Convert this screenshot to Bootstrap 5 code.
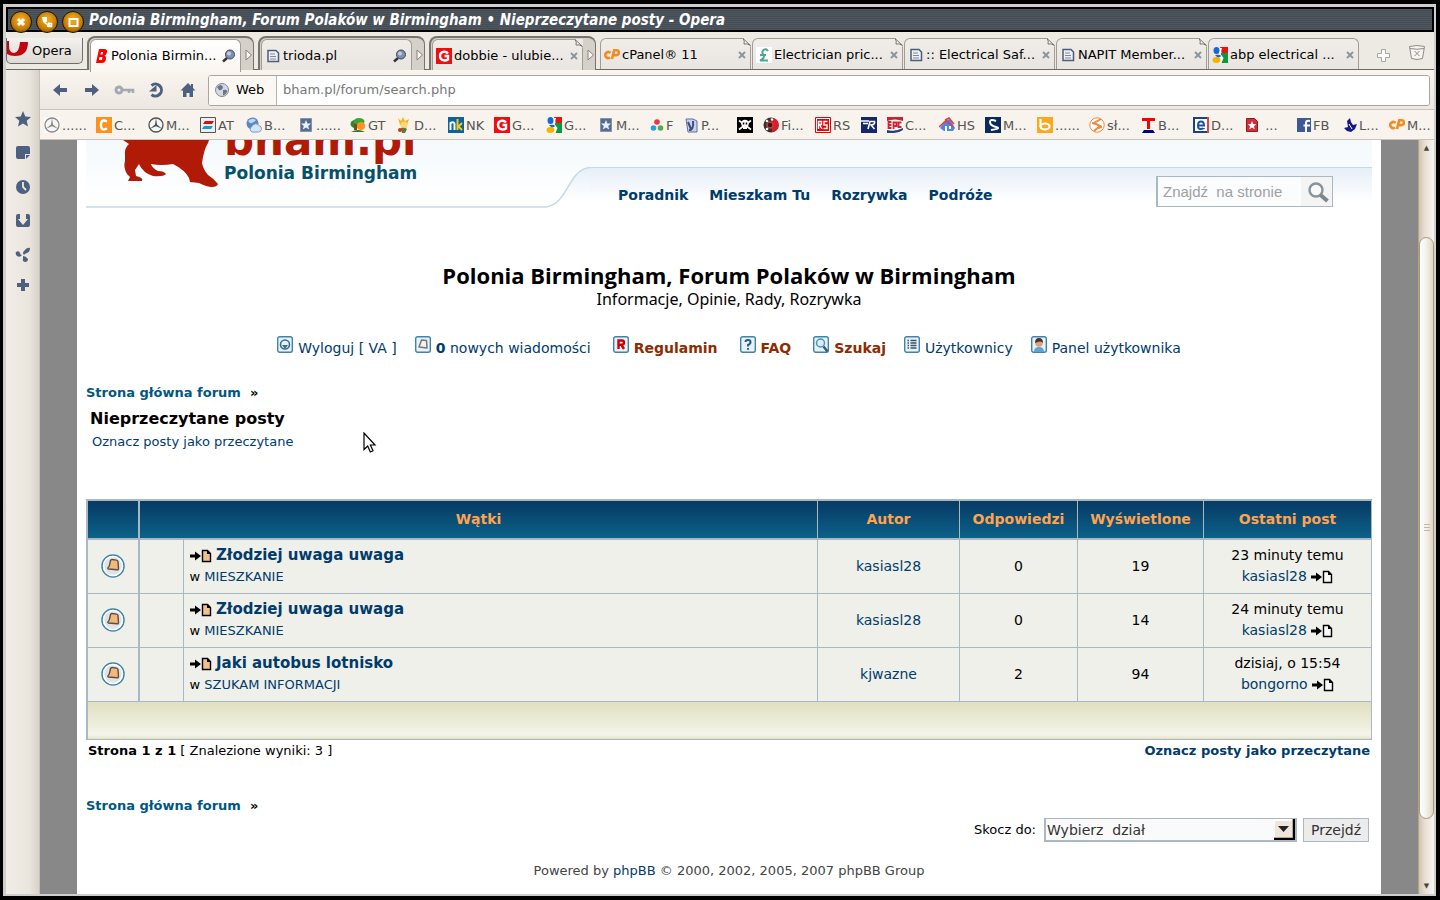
<!DOCTYPE html>
<html lang="pl">
<head>
<meta charset="utf-8">
<meta name="viewport" content="width=device-width, initial-scale=1">
<title>Polonia Birmingham, Forum Polaków w Birmingham • Nieprzeczytane posty</title>
<link href="https://cdn.jsdelivr.net/npm/bootstrap@5.3.0/dist/css/bootstrap.min.css" rel="stylesheet">
<style>
  body { font: 13px/18px "DejaVu Sans", sans-serif; color: #000; background: #000; }
  a { color: #003b6b; text-decoration: none; }
  svg { flex: none; }
  button { color: inherit; }

  /* window frame */
  .win { border: solid #000; border-width: 4px 4px 4px 3px; }
  .win-in { border: solid #cecece; border-width: 3px 2px 2px 3px; background: #ede9e3; }
  .titlebar { height: 25px; border: 2px solid #000; background: repeating-linear-gradient(#4e565e 0 1px, #444c55 1px 2px); padding-left: 2px; }
  .titlebar h1 { font: italic bold 15px/22px "DejaVu Sans Condensed", "DejaVu Sans", sans-serif; color: #fff; margin: 0; padding-left: 1px; }
  .orb { width: 22px; height: 22px; margin: 2px 4px 0 0; border: 1px solid #1c1200; border-radius: 50%; background: radial-gradient(circle at 50% 40%, #e8a31c 20%, #c47a02 60%, #5e3600 100%); padding: 0; z-index: 2; display: flex; align-items: center; justify-content: center; flex: none; }

  /* tabs */
  .tabs { height: 38px; border-bottom: 1px solid #6d6a66; padding-right: 8px; }
  .menu-btn { width: 77px; height: 26px; margin: 6px 4px 0 0; border: 1px solid #6f6d69; border-top: 0; border-radius: 0 0 5px 5px; background: linear-gradient(#f4f2ef, #dedad4); padding: 0; }
  .tabgroup { width: 167px; height: 34px; margin: 4px 4px 0 0; border: 1px solid #77736d; border-width: 2px 1px 0 2px; border-radius: 8px 8px 0 0; background: #d5d0c8; padding: 1px 0 0 1px; }
  .pagetab { width: 151px; height: 31px; border: 1px solid #a09c95; border-bottom: 0; border-radius: 6px 6px 0 0; background: linear-gradient(#f0ede9, #e9e6e1); color: #000; padding: 1px 4px 0 3px; position: relative; display: flex; align-items: center; gap: 2px; }
  .pagetab span { white-space: nowrap; }
  .pagetab.current { background: linear-gradient(#fff, #faf6f1); height: 33px; padding-bottom: 2px; }
  .pagetab.single { margin: 6px 1px 0 0; height: 31px; flex: none; }
  .fold { position: absolute; top: -1px; right: -1px; }

  /* side panel and toolbars */
  .panel { width: 34px; background: linear-gradient(90deg, #f1ede6, #eae5dd 70%, #d8d2c9); border-right: 1px solid #c5c0b8; padding-top: 41px; gap: 18px; }
  .panel button, .toolbar button { border: 0; background: none; padding: 0; line-height: 0; }
  .panel button:last-child { margin-top: -4px; }
  .toolbar { height: 40px; background: linear-gradient(#faf5ef, #ece7e1); border-bottom: 1px solid #c8c4bd; padding: 1px 4px 0 12px; }
  .address { height: 31px; border: 1px solid #a9a59f; border-radius: 3px; background: #fff; margin-left: -4px; }
  .address .kind { width: 68px; border-right: 1px solid #b9b5ae; background: #fbf8f4; padding-left: 5px; gap: 6px; }
  .address input { border: 0; outline: 0; color: #777; padding: 0 6px; min-width: 0; }
  .marks { height: 30px; background: #f8f3ec; border-bottom: 1px solid #c9c4bb; padding-left: 4px; }
  .bm { width: 52px; color: #555; display: flex; align-items: center; gap: 2px; white-space: nowrap; flex: none; }
  .bm.pair { width: 46px; } .bm.one { width: 35px; } .bm.bare { width: 26px; }
  .bm span { padding-top: 2px; }

  /* page */
  .viewport { background: #888; }
  .sheet { background: #fff; margin: 0 37px; padding: 0 9px; }
  .sky { background: linear-gradient(#f4f9fc, #fff 90%); height: 69px; }
  .menu { margin-top: 27px; height: 42px; border-top: 1px solid #c5d9e8; background: linear-gradient(#e6eff7, #fff 34px); font-size: 14px; }
  .menu nav { gap: 21px; }
  .menu a { font-weight: bold; line-height: 22px; }
  .find { border: 1px solid #a9b8c2; border-left-width: 2px; width: 177px; height: 31px; background: #fafcfe; margin: 8px 39px 0 0; }
  .find input { border: 0; outline: 0; background: none; font: 15px/20px "Liberation Sans", sans-serif; color: #a0a0a0; padding: 0 5px; min-width: 0; }
  .find input::placeholder { color: #a0a0a0; }
  .find button { border: 0; background: #f4f4f4; padding: 0 2px 0 5px; line-height: 0; }
  .sitename { font: bold 22px/28px "Open Sans", sans-serif; margin: 0; }
  .motto { font: 16px/20px "Noto Sans", sans-serif; margin: 0; }
  .links { gap: 18px; }
  .links a { display: inline-flex; align-items: flex-start; gap: 5px; font-size: 14px; line-height: 22px; }
  .links svg { margin-top: -1px; }
  .links .hot { color: #902b00; font-weight: bold; }
  .crumb { font-size: 13px; font-weight: bold; line-height: 20px; }
  .crumb a { color: #005784; }
  .crumb.low { margin-top: 36px; }
  .pagename { font: bold 16px/24px "DejaVu Sans", sans-serif; margin: 4px 0 0; padding-left: 4px; }
  .markall { line-height: 22px; margin: 0; padding-left: 6px; }

  .threads { width: 100%; margin-top: 46px; table-layout: fixed; border-collapse: collapse; border: 1px solid #a9b8c2; border-width: 2px 1px 1px 2px; font-size: 14px; line-height: 21px; text-align: center; }
  .threads th { height: 39px; color: #ffa34f; background: linear-gradient(#063a63, #0c6189); border: 1px solid #a9b8c2; border-width: 0 1px 2px 1px; padding: 0; }
  .threads td { height: 54px; background: #eff0ea; border: 1px solid #a9b8c2; padding: 0; }
  .threads th:first-child, .threads tbody td:first-child { border-right-width: 2px; }
  .threads .topic { text-align: left; padding-left: 6px; }
  .topic a.name { font-size: 15px; font-weight: bold; }
  .topic small { font-size: 13px; line-height: 22px; display: block; }
  .threads tfoot td { height: 38px; background: linear-gradient(#e0dfc0, #f4f4ea 90%, #e6e5cc); }
  .pages { padding: 2px 2px 0; }
  .jump { padding: 2px 3px 0 0; gap: 6px; }
  .jump label { padding-right: 2px; }
  .jump select { appearance: none; width: 253px; height: 24px; border: 1px solid #a9b8c2; border-width: 1px 2px 2px 2px; border-radius: 0; padding: 1px 2px 0 1px; font: 14px/20px "DejaVu Sans", sans-serif; color: #333; background: #fafafa url("data:image/svg+xml,%3Csvg xmlns='http://www.w3.org/2000/svg' width='21' height='21'%3E%3Cpath d='M0 0h21v21H0z'/%3E%3Cpath d='M0 0h19v19H0z' fill='%23b8a88c'/%3E%3Cpath d='M0 0h18v18H0z' fill='%23fff'/%3E%3Cpath d='M1 2h17v16H1z' fill='%23ece6dc'/%3E%3Cpath d='M4 7h11l-5.500 6z' fill='%23222'/%3E%3C/svg%3E") right 0 top 0 no-repeat; }
  .jump button { width: 66px; height: 24px; border: 1px solid #a9b8c2; background: #ececec; color: #333; padding: 0; font-size: 14px; line-height: 20px; }
  .legal { color: #444; font-size: 13px; }

  .scroll { width: 16px; background: linear-gradient(90deg, #cfc4b3, #e8e0d4 40%, #f8f5f0); border-left: 1px solid #b3a384; font-size: 7px; line-height: 16px; color: #4a463f; }
  .scroll .thumb { flex: 581; border: 1px solid #a9997b; border-radius: 8px; background: linear-gradient(90deg, #fff, #f4f0e8 50%, #ddd5c6); }
  .grip { width: 6px; height: 7px; background: repeating-linear-gradient(#c4b79f 0 1px, transparent 1px 3px); }
  .pointer { position: absolute; left: 277px; top: 49px; }
</style>
</head>
<body>

<svg width="0" height="0" class="position-absolute" aria-hidden="true">
  <symbol id="doc" viewBox="0 0 16 16"><path d="M3 2.500h8l2.500 2.500v8.500H3z" fill="#eef0f3" stroke="#4d5d78" stroke-width="1.500"/><path d="M5 6h5M5 8.500h6M5 11h6" stroke="#7b889c"/></symbol>
  <symbol id="lens" viewBox="0 0 14 14"><path d="M5 9L1 12.500" stroke="#333" stroke-width="2.500"/><circle cx="8" cy="5.500" r="4.500" fill="#7f8fae" stroke="#3b4660"/><circle cx="7" cy="4.500" r="2" fill="#c2cde0"/></symbol>
  <symbol id="next" viewBox="0 0 8 12"><path d="M1 1v10l5.500-5z" fill="#f7f5f2" stroke="#87827a"/></symbol>
  <symbol id="cross" viewBox="0 0 8 8"><path d="M1 1l6 6M7 1L1 7" stroke="#8a929c" stroke-width="1.800"/></symbol>
  <symbol id="corner" viewBox="0 0 8 9"><path d="M0 0h8v9z" fill="#ede9e3"/><path d="M0 .500Q2 3 1 6q3-1 6.500 1.500z" fill="#fff" stroke="#77736d"/></symbol>
  <symbol id="gred" viewBox="0 0 16 16"><path d="M0 0h16v16H0z" fill="#f00d0d"/><path d="M12 5.500C9.500 2.500 4 3.500 4 8s5 5.500 8 3.500V8H8.500" fill="none" stroke="#fff" stroke-width="2.400"/></symbol>
  <symbol id="goog" viewBox="0 0 16 16"><path d="M8 0h8v7H10z" fill="#e11"/><path d="M9 6h7v10H9z" fill="#0a9a3e"/><path d="M7 1h3L8.500 7l3 4-2 5H7z" fill="#fff"/><ellipse cx="4.500" cy="3.500" rx="3" ry="3.500" fill="#1967d2"/><ellipse cx="4.500" cy="13" rx="4" ry="3" fill="#f5b400"/><path d="M3 8q5-1 6 1-1 2-4 1z" fill="#1967d2"/></symbol>
  <symbol id="star" viewBox="0 0 16 16"><path d="M2.500 1.500h11v13h-11z" fill="#5a6c8c" stroke="#8792a6"/><path d="M8 3l1.400 3.400 3.600.2-2.800 2.300 1 3.600L8 10.500l-3.200 2 1-3.600L3 6.600l3.600-.2z" fill="#e6f3ff"/></symbol>
  <symbol id="merc" viewBox="0 0 16 16"><circle cx="8" cy="8" r="7" fill="#f6f6f6" stroke="currentColor" stroke-width="1.300"/><path d="M8 1l1 6.500 5 4.300L8 9.200l-6 2.600 5-4.300z" fill="currentColor"/></symbol>
  <symbol id="cp" viewBox="0 0 16 16"><path d="M6.500 6A3 3 0 1 0 6 10.500" fill="none" stroke="#f58b1f" stroke-width="2.600"/><path d="M8 12l2.200-8.700h2.300a2.300 2.300 0 0 1 0 4.800h-2.500" fill="none" stroke="#f58b1f" stroke-width="2.600"/></symbol>
  <symbol id="goto" viewBox="0 0 22 14"><path d="M0 5.500h5V2.500l6 4.500-6 4.500V8.500H0z" fill="#000"/><path d="M12.500 1.500h5L20.500 4.500v8h-8z" fill="currentColor" stroke="#000" stroke-width="1.400"/><path d="M17 1v4h4z"/></symbol>
  <symbol id="unread" viewBox="0 0 24 24"><circle cx="12" cy="12" r="11" fill="#dfe2e6" stroke="#3d86a8" stroke-width="1.500"/><circle cx="12" cy="12" r="9.500" fill="none" stroke="#fff" stroke-width="1.500"/><path d="M9.500 6.500q.5-1.300 2-1l4 .6q1.300.2 1.500 1.500l.5 7q0 1.500-1.500 1.200L7.500 15q-1-.3-.5-1.300 1.200-1 1.500-2.500z" fill="#f4b878" stroke="#5a5048" stroke-width="1.400" stroke-linejoin="round"/></symbol>
  <symbol id="tile" viewBox="0 0 16 17"><rect x=".7" y=".7" width="14.600" height="15.600" rx="2" fill="#e9f2f8" stroke="#3f83ad" stroke-width="1.400"/></symbol>
</svg>

<div class="win vh-100 d-flex overflow-hidden">
<div class="win-in d-flex flex-column flex-grow-1 overflow-hidden">

  <header class="titlebar d-flex flex-shrink-0 align-items-start">
    <button class="orb" aria-label="Zamknij"><svg width="10" height="10"><path d="M2 2l6 6M8 2L2 8" stroke="#fff" stroke-width="3"/></svg></button>
    <button class="orb" aria-label="Minimalizuj"><svg width="12" height="12"><path d="M1 1h5v5H4l3 2v-2l4 5H6V9L2 6z" fill="#fff"/><path d="M7.500 7.500h3v3h-3z" fill="none" stroke="#fff" stroke-width="1.500"/></svg></button>
    <button class="orb" aria-label="Maksymalizuj"><svg width="11" height="11"><path d="M1.500 2h8v7h-8z" fill="none" stroke="#fff" stroke-width="2"/></svg></button>
    <h1>Polonia Birmingham, Forum Polaków w Birmingham • Nieprzeczytane posty - Opera</h1>
  </header>

  <nav class="tabs d-flex flex-shrink-0" aria-label="Karty">
    <button class="menu-btn d-flex align-items-center flex-shrink-0"><svg width="21" height="20" class="me-1 mb-1"><path d="M0 2h2v5q0 7 5 7t6-11h8q0 14-13 14-5 0-8-2z" fill="#c4040e"/></svg>Opera</button>
    <div class="tabgroup d-flex flex-shrink-0">
      <a href="#" class="pagetab current"><svg width="15" height="16"><path d="M2 15L5 1h5q4 0 3 3.500-.7 2.500-2.500 3 2 .6 1.500 3.500-.6 4-4 4zM7 4l-.6 2.500h2.300L9 4zM5.500 9L5 12h3l.5-3z" fill="#f00" fill-rule="evenodd"/></svg><span class="flex-grow-1">Polonia Birmin...</span><svg width="14" height="14"><use href="#lens"/></svg></a>
      <svg width="8" height="12" class="align-self-center ms-1"><use href="#next"/></svg>
    </div>
    <div class="tabgroup d-flex flex-shrink-0">
      <a href="#" class="pagetab"><svg width="16" height="16"><use href="#doc"/></svg><span class="flex-grow-1">trioda.pl</span><svg width="14" height="14"><use href="#lens"/></svg></a>
      <svg width="8" height="12" class="align-self-center ms-1"><use href="#next"/></svg>
    </div>
    <div class="tabgroup d-flex flex-shrink-0">
      <a href="#" class="pagetab"><svg width="16" height="16"><use href="#gred"/></svg><span class="flex-grow-1">dobbie - ulubie...</span><svg width="8" height="8"><use href="#cross"/></svg><svg class="fold" width="8" height="9"><use href="#corner"/></svg></a>
      <svg width="8" height="12" class="align-self-center ms-1"><use href="#next"/></svg>
    </div>
    <a href="#" class="pagetab single"><svg width="16" height="16"><use href="#cp"/></svg><span class="flex-grow-1">cPanel® 11</span><svg width="8" height="8"><use href="#cross"/></svg><svg class="fold" width="8" height="9"><use href="#corner"/></svg></a>
    <a href="#" class="pagetab single"><svg width="16" height="16"><path d="M0 0h16v16H0z" fill="#fff"/><path d="M12 4Q10 1 7.500 3T8 9q0 3-4 4.500h8M4 8h6" fill="none" stroke="#4aa78f" stroke-width="2"/></svg><span class="flex-grow-1">Electrician pric...</span><svg width="8" height="8"><use href="#cross"/></svg><svg class="fold" width="8" height="9"><use href="#corner"/></svg></a>
    <a href="#" class="pagetab single"><svg width="16" height="16"><use href="#doc"/></svg><span class="flex-grow-1">:: Electrical Saf...</span><svg width="8" height="8"><use href="#cross"/></svg><svg class="fold" width="8" height="9"><use href="#corner"/></svg></a>
    <a href="#" class="pagetab single"><svg width="16" height="16"><use href="#doc"/></svg><span class="flex-grow-1">NAPIT Member...</span><svg width="8" height="8"><use href="#cross"/></svg><svg class="fold" width="8" height="9"><use href="#corner"/></svg></a>
    <a href="#" class="pagetab single"><svg width="16" height="16"><use href="#goog"/></svg><span class="flex-grow-1">abp electrical ...</span><svg width="8" height="8"><use href="#cross"/></svg></a>
    <svg width="15" height="15" class="ms-3 mt-3"><path d="M5.500 1.500h4v4h4v4h-4v4h-4v-4h-4v-4h4z" fill="#fafafa" stroke="#a8a49e"/></svg>
    <svg width="18" height="17" class="ms-auto mt-2 pt-1 overflow-visible"><path d="M1.500 2.500q7.500-2 15 0l-2 12q-5.500 2-11 0z" fill="#f7f5f2" stroke="#8f8b85"/><path d="M2 4.500q7 1.500 14 0M6.500 7l5 5M11.500 7l-5 5" fill="none" stroke="#8f8b85"/></svg>
  </nav>

  <div class="d-flex flex-grow-1 overflow-hidden">
    <aside class="panel d-flex flex-column align-items-center flex-shrink-0">
      <button aria-label="Zakładki"><svg width="16" height="16"><path d="M8 0l2.300 5.400 5.700.5-4.300 3.900L13 15.500l-5-3-5 3 1.300-5.700L0 5.900l5.700-.5z" fill="#4d607f"/></svg></button>
      <button aria-label="Notatki"><svg width="16" height="16"><path d="M1 3q0-2 2-2h10q2 0 2 2v6h-5v5H3q-2 0-2-2zM11 10h4l-4 4z" fill="#4d607f"/></svg></button>
      <button aria-label="Historia"><svg width="16" height="16"><circle cx="8" cy="8" r="7" fill="#4d607f"/><path d="M8 3v5l3 3" fill="none" stroke="#f0ece5" stroke-width="1.800"/></svg></button>
      <button aria-label="Pobieranie"><svg width="16" height="16"><path d="M3 1h2v5H3l5 6 5-6h-2V1h2q2 0 2 2v9q0 2-2 2H3q-2 0-2-2V3q0-2 2-2z" fill="#4d607f"/></svg></button>
      <button aria-label="Unite"><svg width="16" height="16"><path d="M1 5q3-2 4 1 0 2 2 2-2 3-5 1Q0 7 1 5zM9 4q3-4 6-3 0 4-3 5-2 .5-3 2-2-2 0-4zM8 9q3 0 5 3 0 3-3 3-3-1-2-3z" fill="#4d607f"/></svg></button>
      <button aria-label="Dodaj"><svg width="14" height="16"><path d="M5 2h4v4h4v4H9v4H5v-4H1V6h4z" fill="#4d607f"/></svg></button>
    </aside>

    <div class="d-flex flex-column flex-grow-1 overflow-hidden">
      <div class="toolbar d-flex align-items-center flex-shrink-0 gap-3">
        <button aria-label="Wstecz"><svg width="16" height="16"><path d="M15 6H8V2L1 8l7 6v-4h7z" fill="#4d607f"/></svg></button>
        <button aria-label="Dalej"><svg width="16" height="16"><path d="M1 6h7V2l7 6-7 6v-4H1z" fill="#4d607f"/></svg></button>
        <button aria-label="Hasło"><svg width="16" height="16" class="overflow-visible"><circle cx="3" cy="8" r="3" fill="none" stroke="#a3a9b3" stroke-width="3"/><path d="M6 8h11v3M13 8v3" stroke="#a3a9b3" stroke-width="2.500" fill="none"/></svg></button>
        <button aria-label="Odśwież"><svg width="16" height="16"><path d="M3.500 3.500a6 6 0 1 1 0 9" fill="none" stroke="#4d607f" stroke-width="3"/><path d="M1 9.500h7.500V3z" fill="#4d607f"/></svg></button>
        <button aria-label="Strona startowa"><svg width="16" height="16"><path d="M8 1L.5 8.500H3V15h3.500v-4h3v4H13V8.500h2.500L13 6V2h-2v2z" fill="#4d607f"/></svg></button>
        <div class="address d-flex flex-grow-1 overflow-hidden">
          <div class="kind d-flex align-items-center flex-shrink-0"><svg width="16" height="16"><circle cx="8" cy="8" r="6.500" fill="#d6dae0" stroke="#7d8796"/><path d="M3 5q4-4 6 0-1 4-4 3zM9 8q5-1 4 2-2 4-4 3z" fill="#6c7789"/></svg><label for="url">Web</label></div>
          <input id="url" class="flex-grow-1" value="bham.pl/forum/search.php">
        </div>
      </div>

      <nav class="marks d-flex align-items-center flex-shrink-0 overflow-hidden" aria-label="Pasek zakładek">
        <a href="#" class="bm"><svg width="16" height="16"><path d="M0 0h16v16H0z" fill="#fff"/><use href="#merc" color="#8a8a85"/></svg><span>......</span></a>
        <a href="#" class="bm"><svg width="16" height="16"><path d="M0 0h16v16H0z" fill="#f8941d"/><path d="M11 4.500q-6-3-6 3.500t6 3.500" fill="none" stroke="#fff" stroke-width="2.400"/></svg><span>C...</span></a>
        <a href="#" class="bm"><svg width="16" height="16"><use href="#merc" color="#4d5252"/></svg><span>M...</span></a>
        <a href="#" class="bm pair"><svg width="16" height="16"><path d="M.5.500h15v15H.500z" fill="#eee" stroke="#555"/><path d="M5 4h9l-2 3H3z" fill="#d40f1c"/><path d="M4 9h9l-2 3H2z" fill="#159bd0"/></svg><span>AT</span></a>
        <a href="#" class="bm"><svg width="16" height="16"><circle cx="6.500" cy="6.500" r="6" fill="#5c86bd"/><path d="M2 4q4-4 8-1-3 4-6 3z" fill="#bdd6f2"/><path d="M6 15a3 3 0 0 1 0-5.500 4 4 0 0 1 7-1q3 1 2.500 4-1 2.500-3 2.500z" fill="#d5e5f8" stroke="#7c9cc8"/></svg><span>B...</span></a>
        <a href="#" class="bm"><svg width="16" height="16"><use href="#star"/></svg><span>......</span></a>
        <a href="#" class="bm pair"><svg width="16" height="16"><ellipse cx="5" cy="7" rx="4.500" ry="4" fill="#2c8a2e"/><ellipse cx="9" cy="4.500" rx="5.500" ry="3.500" fill="#3ba238"/><circle cx="11" cy="9" r="4" fill="#f7941d"/><path d="M4 7h3v6H4z" fill="#7a4a1a"/><path d="M1 15q7-4 14 0z" fill="#337a28"/></svg><span>GT</span></a>
        <a href="#" class="bm"><svg width="16" height="16"><path d="M2 1l3 3 2-4 2 4 4-2-2 6H4z" fill="#f4b61e"/><circle cx="8" cy="8" r="3.500" fill="#f7d97a"/><path d="M5 11q4-1 6 1l-2 4H6z" fill="#5e7a34"/><circle cx="4" cy="13" r="2" fill="#c23a1c"/></svg><span>D...</span></a>
        <a href="#" class="bm pair"><svg width="16" height="16"><path d="M0 0h16v16H0z" fill="#0b63a0"/><path d="M2.500 13V6q4-2 4 1.500V13" fill="none" stroke="#fff" stroke-width="2"/><path d="M9.500 2v11M14 6l-3.500 3.500L14 13" fill="none" stroke="#f9c81e" stroke-width="2"/></svg><span>NK</span></a>
        <a href="#" class="bm"><svg width="16" height="16"><use href="#gred"/></svg><span>G...</span></a>
        <a href="#" class="bm"><svg width="16" height="16"><use href="#goog"/></svg><span>G...</span></a>
        <a href="#" class="bm"><svg width="16" height="16"><use href="#star"/></svg><span>M...</span></a>
        <a href="#" class="bm one"><svg width="14" height="16"><circle cx="7" cy="5" r="2.800" fill="#ef3340"/><circle cx="3.500" cy="11" r="2.800" fill="#2a9fd8"/><circle cx="10.500" cy="11" r="2.800" fill="#4cae4f"/></svg><span>F</span></a>
        <a href="#" class="bm"><svg width="14" height="16"><path d="M1 2h7l4 2v11H3z" fill="#c9d3ea" stroke="#5f709b"/><path d="M4 13q5 0 4-9M3 5l3 7" fill="none" stroke="#3e4e83" stroke-width="2"/></svg><span>P...</span></a>
        <a href="#" class="bm bare" aria-label="Skull"><svg width="16" height="16"><path d="M0 0h16v16H0z"/><path d="M2 3.500l12 9M14 3.500l-12 9" stroke="#fff" stroke-width="1.600"/><circle cx="8" cy="6.500" r="3.800" fill="#fff"/><path d="M6 9h4v3H6z" fill="#fff"/><path d="M5.800 5.500h1.500v2H5.800zM8.700 5.500h1.500v2H8.700z"/></svg></a>
        <a href="#" class="bm"><svg width="16" height="16"><circle cx="8" cy="8" r="7.500" fill="#333"/><path d="M9 1a7 7 0 0 1 0 14z" fill="#d81e2c"/><circle cx="7" cy="8" r="3" fill="#222" stroke="#d33" stroke-width="1.500"/><circle cx="4" cy="4" r="1.300" fill="#fff"/><circle cx="4" cy="12" r="1.300" fill="#fff"/><circle cx="9" cy="2.500" r="1.300" fill="#fff"/></svg><span>Fi...</span></a>
        <a href="#" class="bm pair"><svg width="16" height="16"><path d="M.5.500h15v15H.500z" fill="#fff" stroke="#e00"/><path d="M2 2h12v12H2z" fill="#e00"/><path d="M3.500 12V4.500h3v3h-2l2.500 4.500M12.500 4.500H9V8h3v3.500H8.500" fill="none" stroke="#fff" stroke-width="1.400"/></svg><span>RS</span></a>
        <a href="#" class="bm bare" aria-label="R"><svg width="16" height="16"><path d="M0 0h16v16H0z" fill="#14276a"/><path d="M0 4h8M2 6.500h5M7 12L9 4.500h4.500q1 3-3.500 3.500l3.500 4" fill="none" stroke="#fff" stroke-width="1.600"/></svg></a>
        <a href="#" class="bm"><svg width="16" height="16"><path d="M0 0h16v16H0z" fill="#fff"/><path d="M0 0h16v4Q8 1 0 4z" fill="#c8232f"/><path d="M0 16v-3q8 2 16-2v2q-4 3-9 3z" fill="#26447c"/><path d="M4.500 5H1.500v6h3M1.500 8h3M6.500 12V5.500h3V9h-3M14.500 5.500H11.500V10h3" fill="none" stroke="#d5202f" stroke-width="1.800"/></svg><span>C...</span></a>
        <a href="#" class="bm pair"><svg width="16" height="16"><path d="M1 11L7 3l4-1 5 9-2 3H5z" fill="#4b86e8"/><path d="M0 10L7 3.500 14 10M6 3l4-2 5 6" fill="none" stroke="#e2413a" stroke-width="1.600"/><path d="M6 9h2v5H6zM10 9h2v3h-2z" fill="#fff"/></svg><span>HS</span></a>
        <a href="#" class="bm"><svg width="16" height="16"><path d="M0 0h16v16H0z" fill="#0a2a5c"/><path d="M11 4Q5 1.500 5 5t6 5-5 3" fill="none" stroke="#fff" stroke-width="2"/></svg><span>M...</span></a>
        <a href="#" class="bm"><svg width="16" height="16"><path d="M0 0h16v16H0z" fill="#fda81b"/><path d="M3.500 2v8" stroke="#fff" stroke-width="2.200"/><ellipse cx="8" cy="9.500" rx="4.500" ry="3" fill="none" stroke="#fff" stroke-width="2.200"/></svg><span>......</span></a>
        <a href="#" class="bm"><svg width="16" height="16"><circle cx="8" cy="8" r="7.200" fill="#fff" stroke="#ef8a3c"/><path d="M12 2L5 6l6 3-6 5M3 6l4 1M9 11l4-1" fill="none" stroke="#ef8a3c" stroke-width="2"/></svg><span>sł...</span></a>
        <a href="#" class="bm"><svg width="15" height="16"><path d="M1 1h13v3H9v8H6V4H1z" fill="#f00"/><path d="M3 13h9l2 3H1z" fill="#00008b"/></svg><span>B...</span></a>
        <a href="#" class="bm"><svg width="16" height="16"><path d="M1 1h14v14H1z" fill="#fff" stroke="#1c3f86" stroke-width="2"/><path d="M15 0v16" stroke="#e2433e" stroke-width="2"/><path d="M4.500 8.500H11q0-4-3-4t-3 4 3 3.500 3-1" fill="none" stroke="#1c4fa8" stroke-width="2"/></svg><span>D...</span></a>
        <a href="#" class="bm"><svg width="14" height="16"><path d="M1.500 1.500h8l3 3v10h-11z" fill="#d12f39" stroke="#8e1a22"/><path d="M7 4l1.200 3 3 .2-2.300 2 .8 3L7 10.500l-2.700 1.700.8-3-2.300-2 3-.2z" fill="#fff"/></svg><span>&nbsp;...</span></a>
        <a href="#" class="bm pair"><svg width="14" height="16"><path d="M0 1h14v14H0z" fill="#3b5998"/><path d="M13 4q-4-1-4 2v9M6.500 8.500H13" fill="none" stroke="#fff" stroke-width="2"/></svg><span>FB</span></a>
        <a href="#" class="bm pair"><svg width="14" height="16"><path d="M4 4l3-3 1 4 2 3 4-1-2 5-4 3-4-1-3-3 4-1z" fill="#18188c"/><path d="M6 7l3 5" stroke="#fff"/></svg><span>L...</span></a>
        <a href="#" class="bm pair"><svg width="16" height="16"><use href="#cp"/></svg><span>M...</span></a>
      </nav>

      <div class="viewport d-flex flex-grow-1 overflow-hidden">
        <main class="sheet flex-grow-1 overflow-hidden">
          <div class="sky d-flex">
            <svg width="504" height="70" viewBox="0 0 504 70">
              <defs><linearGradient id="dip" x1="0" y1="27" x2="0" y2="61" gradientUnits="userSpaceOnUse"><stop stop-color="#e6eff7"/><stop offset="1" stop-color="#fff"/></linearGradient></defs>
              <path d="M460 67c16-2 20-20 30-32q6-7 14-7.500V67z" fill="url(#dip)"/>
              <path d="M0 67h460c16-2 20-20 30-32q6-7 14-7.500" fill="none" stroke="#c5d9e8" stroke-width="1.500"/>
              <path d="M37 0l6 4q-5 4-4 12v5q-2 6 2 13l3 3-2 4h14q2-3-6-5l-1-6 4-6q4 9 14 12 10 1 13-2-2-3-8-3-6-3-7-7 10 2 22 0 12 6 16 14l1 4 9 1q8 4 13 4 5 0 6-3-5-6-10-9-5-6-6-12 2-14 6-20l1-3z" fill="#b11a06"/>
              <text x="138" y="15" font-family="DejaVu Sans, sans-serif" font-weight="bold" font-size="42" fill="#b11a06">bham.pl</text>
              <text x="138" y="39" font-family="DejaVu Sans, sans-serif" font-weight="bold" font-size="17" fill="#07506a">Polonia Birmingham</text>
            </svg>
            <div class="menu d-flex flex-grow-1 align-items-start">
              <nav class="d-flex mt-3 ms-4 ps-1">
                <a href="#">Poradnik</a><a href="#">Mieszkam Tu</a><a href="#">Rozrywka</a><a href="#">Podróże</a>
              </nav>
              <form class="find d-flex ms-auto">
                <input class="flex-grow-1" aria-label="Szukaj na stronie" placeholder="Znajdź  na stronie">
                <button type="button" aria-label="Szukaj"><svg width="24" height="24"><circle cx="10" cy="10" r="6.500" fill="#f8f8f8" stroke="#87929a" stroke-width="2.400"/><path d="M14.500 15l7 6" stroke="#7d878e" stroke-width="4"/></svg></button>
              </form>
            </div>
          </div>

          <div class="text-center pt-5">
            <h2 class="sitename pt-1">Polonia Birmingham, Forum Polaków w Birmingham</h2>
            <p class="motto">Informacje, Opinie, Rady, Rozrywka</p>
          </div>

          <nav class="links d-flex justify-content-center mt-4 pt-1">
            <a href="#"><svg width="16" height="17"><use href="#tile"/><circle cx="8" cy="8.500" r="4.500" fill="none" stroke="#3c6f8e" stroke-width="1.600"/><path d="M5 9h6l-3 4z" fill="#3c6f8e"/></svg>Wyloguj [ VA ]</a>
            <a href="#"><svg width="16" height="17"><use href="#tile"/><path d="M6.500 4l5 .5.5 7.500-8-1z" fill="#f3f3f3" stroke="#777" stroke-width="1.500" stroke-linejoin="round"/></svg><span><b>0</b> nowych wiadomości</span></a>
            <a href="#" class="hot ms-1"><svg width="16" height="17"><use href="#tile"/><path d="M5.500 13V4.500H9q2 0 2 2t-2 2.200H6M8.500 9l2.500 4" fill="none" stroke="#c00" stroke-width="2.400"/></svg>Regulamin</a>
            <a href="#" class="hot ms-1"><svg width="16" height="17"><use href="#tile"/><path d="M5.500 6q0-2 2.500-2t2.500 2T8 9v1.500M8 12v1.800" fill="none" stroke="#1d5d86" stroke-width="2"/></svg>FAQ</a>
            <a href="#" class="hot ms-1"><svg width="16" height="17"><use href="#tile"/><circle cx="7.500" cy="7" r="4" fill="#d9f0fb" stroke="#4d94b8" stroke-width="1.500"/><path d="M10.500 10.500l4 5" stroke="#2f5f7c" stroke-width="2.500"/></svg>Szukaj</a>
            <a href="#"><svg width="16" height="17"><use href="#tile"/><path d="M3.500 4.500h1.500M3.500 7h1.500M3.500 9.500h1.500M3.500 12h1.500M6.500 4.500h6M6.500 7h6M6.500 9.500h6M6.500 12h6" stroke="#36566b" stroke-width="1.400"/></svg>Użytkownicy</a>
            <a href="#"><svg width="16" height="17"><use href="#tile"/><path d="M3 16q0-5 5-5t5 5z" fill="#5fa3d0"/><circle cx="8" cy="7" r="3.800" fill="#d9a37b"/><path d="M4 7q0-5 4-5t4 5q-2-3-8 0z" fill="#4c3526"/></svg>Panel użytkownika</a>
          </nav>

          <div class="position-relative mt-4">
            <div class="crumb"><a href="#">Strona główna forum</a> &nbsp;»</div>
            <h3 class="pagename">Nieprzeczytane posty</h3>
            <p class="markall"><a href="#">Oznacz posty jako przeczytane</a></p>
            <svg class="pointer" width="14" height="22" aria-hidden="true"><path d="M1 1v16.500l3.700-3.500 2.600 6 2.700-1.200L7.400 13H12z" fill="#fff" stroke="#000" stroke-width="1.200"/></svg>
          </div>

          <table class="threads">
            <colgroup><col style="width:52px"><col style="width:44px"><col><col style="width:142px"><col style="width:118px"><col style="width:126px"><col style="width:168px"></colgroup>
            <thead><tr><th></th><th colspan="2">Wątki</th><th>Autor</th><th>Odpowiedzi</th><th>Wyświetlone</th><th>Ostatni post</th></tr></thead>
            <tbody>
              <tr><td><svg width="24" height="24"><use href="#unread"/></svg></td><td></td><td class="topic"><svg width="22" height="14" color="#f4c08a"><use href="#goto"/></svg> <a href="#" class="name">Złodziej uwaga uwaga</a><small>w <a href="#">MIESZKANIE</a></small></td><td><a href="#">kasiasl28</a></td><td>0</td><td>19</td><td>23 minuty temu<br><a href="#">kasiasl28 <svg width="22" height="14" color="#f8f8f8"><use href="#goto"/></svg></a></td></tr>
              <tr><td><svg width="24" height="24"><use href="#unread"/></svg></td><td></td><td class="topic"><svg width="22" height="14" color="#f4c08a"><use href="#goto"/></svg> <a href="#" class="name">Złodziej uwaga uwaga</a><small>w <a href="#">MIESZKANIE</a></small></td><td><a href="#">kasiasl28</a></td><td>0</td><td>14</td><td>24 minuty temu<br><a href="#">kasiasl28 <svg width="22" height="14" color="#f8f8f8"><use href="#goto"/></svg></a></td></tr>
              <tr><td><svg width="24" height="24"><use href="#unread"/></svg></td><td></td><td class="topic"><svg width="22" height="14" color="#f4c08a"><use href="#goto"/></svg> <a href="#" class="name">Jaki autobus lotnisko</a><small>w <a href="#">SZUKAM INFORMACJI</a></small></td><td><a href="#">kjwazne</a></td><td>2</td><td>94</td><td>dzisiaj, o 15:54<br><a href="#">bongorno <svg width="22" height="14" color="#f8f8f8"><use href="#goto"/></svg></a></td></tr>
            </tbody>
            <tfoot><tr><td colspan="7"></td></tr></tfoot>
          </table>
          <div class="pages d-flex justify-content-between">
            <span><b>Strona 1 z 1</b> [ Znalezione wyniki: 3 ]</span>
            <a href="#" class="fw-bold">Oznacz posty jako przeczytane</a>
          </div>

          <div class="crumb low"><a href="#">Strona główna forum</a> &nbsp;»</div>
          <form class="jump d-flex justify-content-end align-items-center">
            <label for="forum">Skocz do:</label>
            <select id="forum"><option>Wybierz&nbsp; dział</option></select>
            <button type="button">Przejdź</button>
          </form>
          <p class="legal text-center m-0 pt-3 mt-1">Powered by <a href="#">phpBB</a> © 2000, 2002, 2005, 2007 phpBB Group</p>
        </main>

        <div class="scroll d-flex flex-column align-items-center flex-shrink-0" aria-hidden="true">
          <span>▲</span><div style="flex:81"></div>
          <div class="thumb w-100 d-flex align-items-center justify-content-center"><div class="grip"></div></div>
          <div style="flex:59"></div><span>▼</span>
        </div>
      </div>
    </div>
  </div>
</div>
</div>
<script src="https://cdn.jsdelivr.net/npm/bootstrap@5.3.0/dist/js/bootstrap.bundle.min.js"></script>
</body>
</html>
